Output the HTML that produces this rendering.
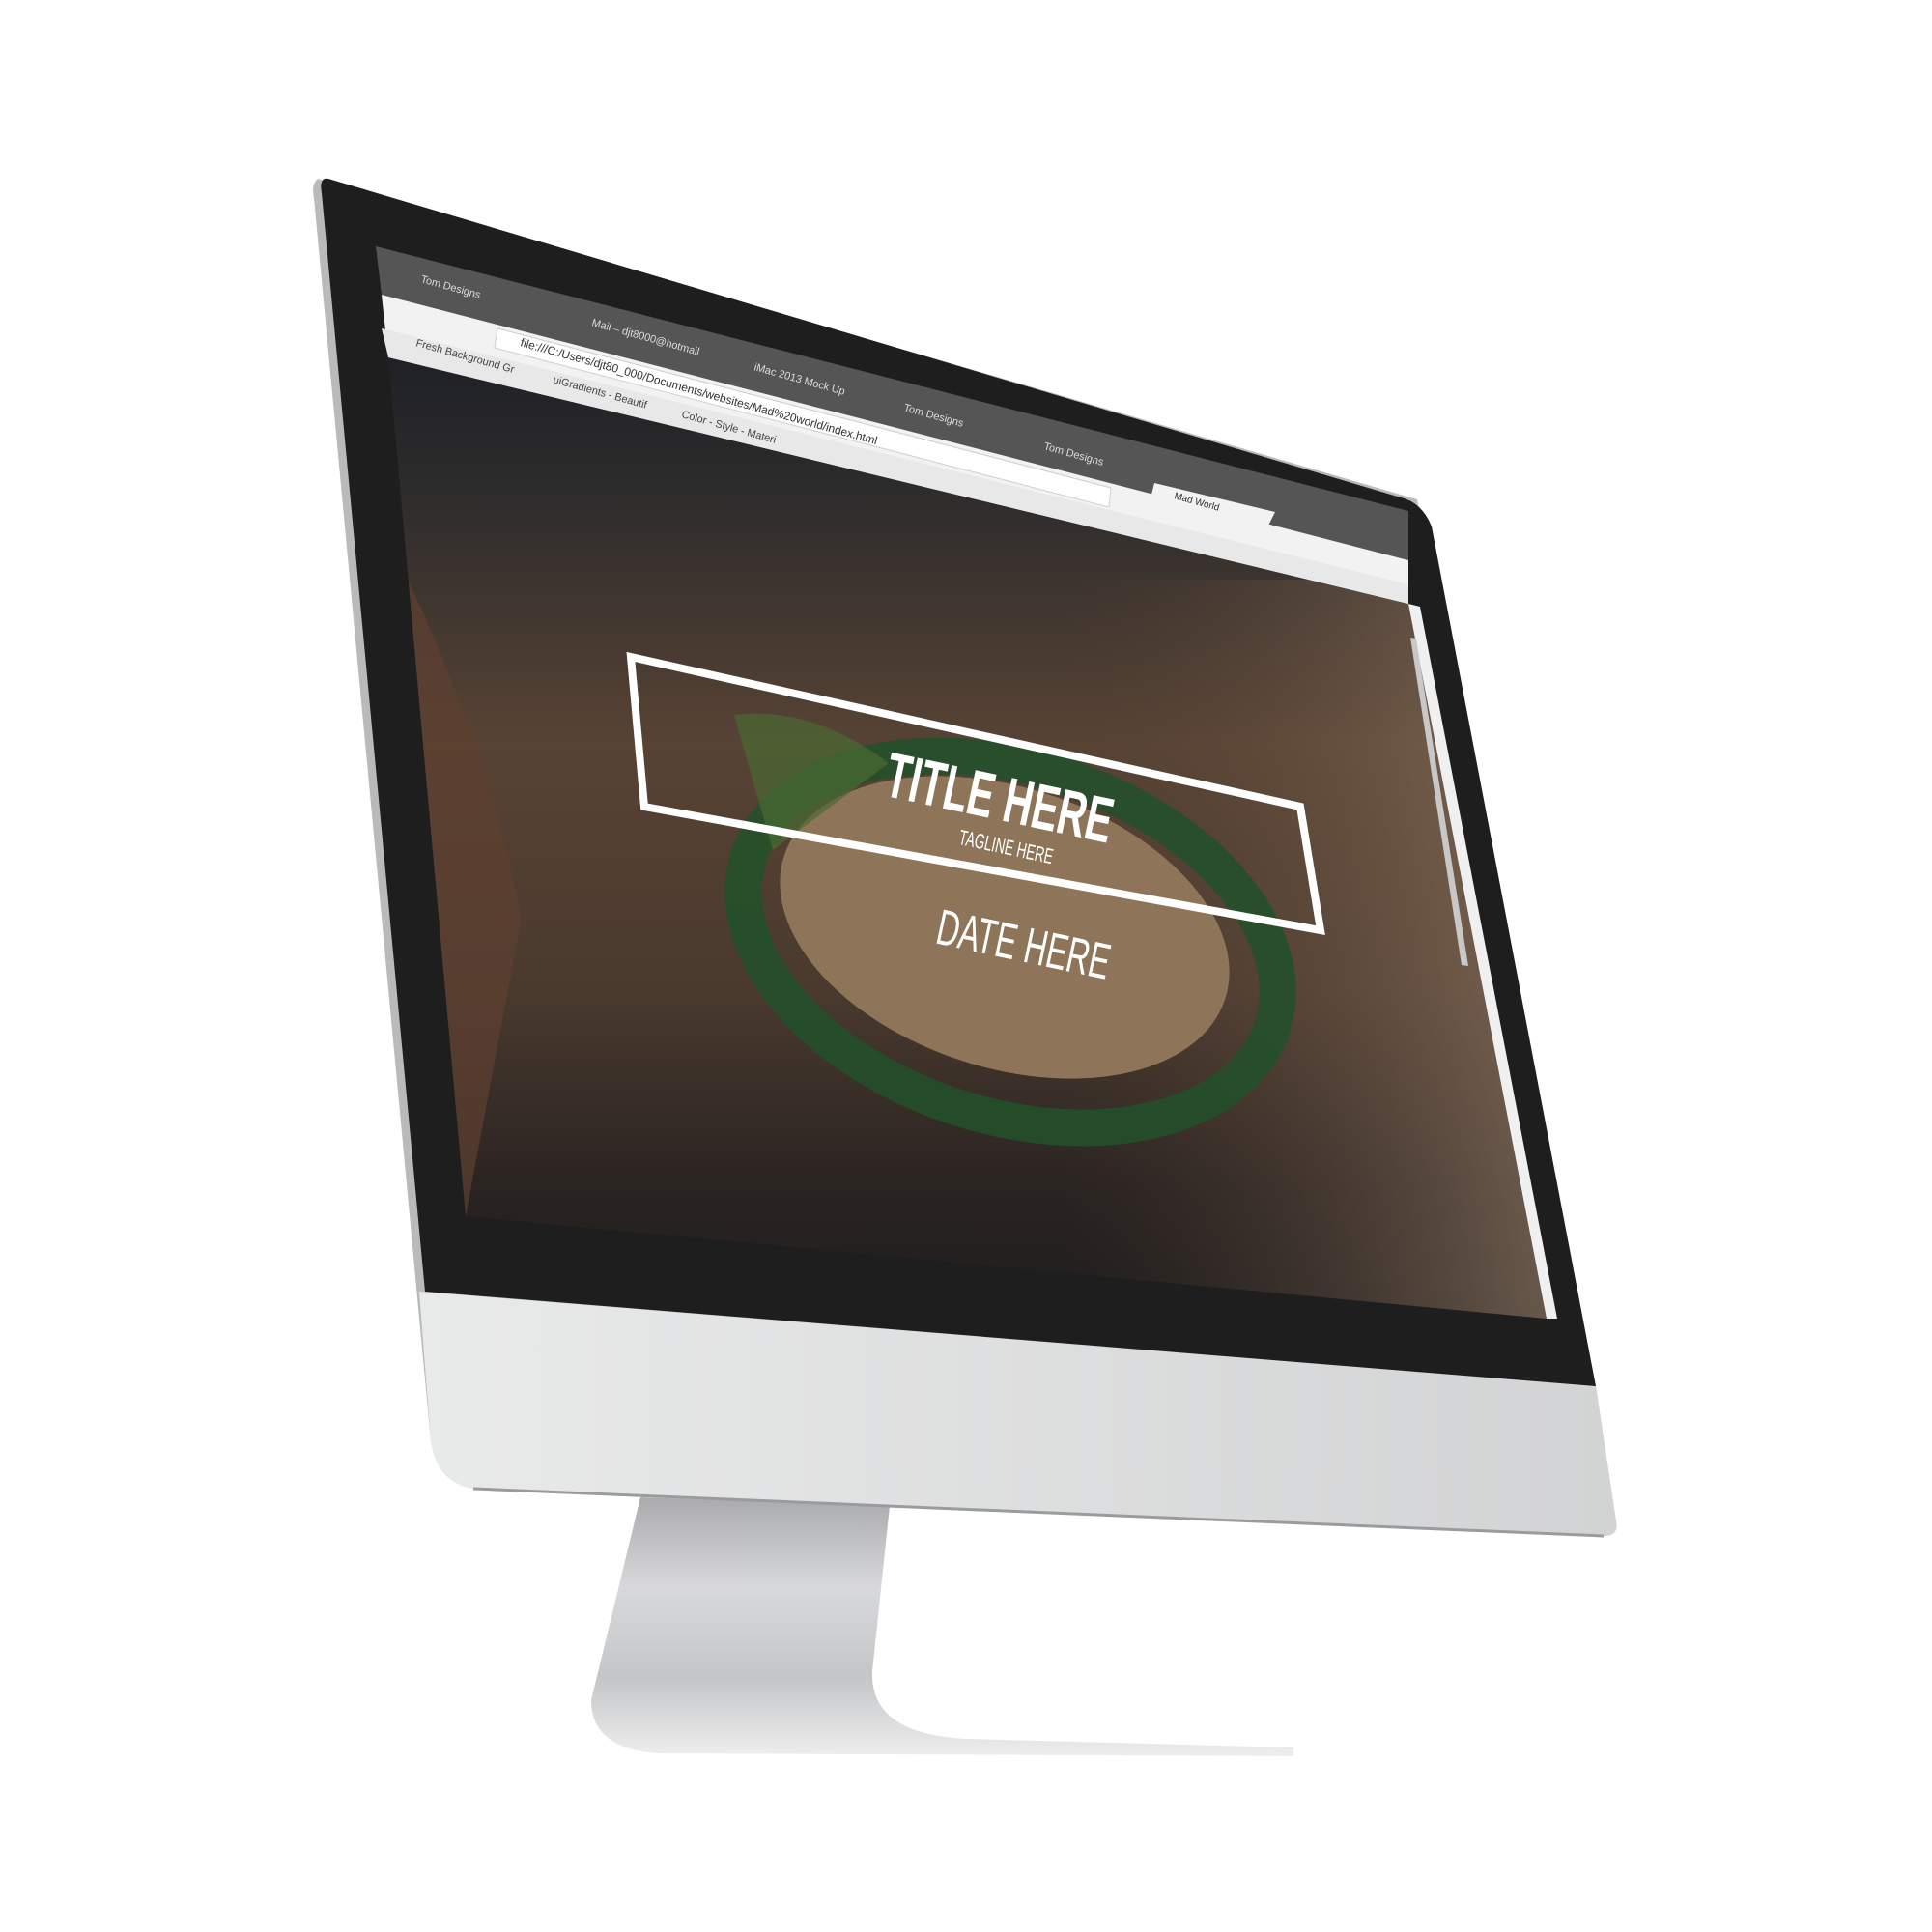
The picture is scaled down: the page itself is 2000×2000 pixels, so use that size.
<!DOCTYPE html>
<html><head><meta charset="utf-8"><style>
html,body{margin:0;padding:0;background:#fff;width:2000px;height:2000px;overflow:hidden}
svg{display:block}
text{font-family:"Liberation Sans",sans-serif}
</style></head><body>
<svg width="2000" height="2000" viewBox="0 0 2000 2000" xmlns="http://www.w3.org/2000/svg">
<defs>
<linearGradient id="stand" x1="0" y1="0" x2="0" y2="1">
<stop offset="0" stop-color="#a9aaac"/><stop offset="0.35" stop-color="#d8d9db"/><stop offset="0.7" stop-color="#c4c5c7"/><stop offset="1" stop-color="#eeeeee"/></linearGradient>
<linearGradient id="chin" x1="0" y1="0" x2="1" y2="0">
<stop offset="0" stop-color="#e9eaea"/><stop offset="1" stop-color="#d2d3d4"/></linearGradient>
<linearGradient id="sky" x1="0" y1="0" x2="0" y2="1">
<stop offset="0" stop-color="#1e2026"/><stop offset="0.15" stop-color="#2e2c2c"/><stop offset="0.4" stop-color="#574334"/><stop offset="0.65" stop-color="#4a3a2e"/><stop offset="0.85" stop-color="#2a2422"/><stop offset="1" stop-color="#1d1c1c"/></linearGradient>
<linearGradient id="right" x1="0" y1="0" x2="1" y2="0">
<stop offset="0" stop-color="#5a4030" stop-opacity="0"/><stop offset="1" stop-color="#a08670" stop-opacity="0.6"/></linearGradient>
<clipPath id="scr"><polygon points="402,370 1458,625 1601,1365 482,1259"/></clipPath>
</defs>
<path d="M663,1550 L921,1559 L903,1730 Q900,1795 1000,1800 L1339,1809 L1339,1818 L680,1815 Q612,1810 612,1760 Z" fill="url(#stand)"/>
<path d="M329,185 Q322,190 325,205 L446,1492 Q455,1535 490,1540 L1660,1590 Q1676,1590 1673,1575 L1652,1435 L1467,517 Z" fill="#b9babc"/>
<path d="M434,1337 L1652,1435 L1673,1575 Q1676,1590 1660,1590 L490,1541 Q452,1535 446,1492 Z" fill="url(#chin)"/>
<path d="M490,1541 L1660,1590" stroke="#9a9b9d" stroke-width="3"/>
<path d="M340,185 Q330,183 333,200 L440,1337 L1652,1435 L1482,545 Q1472,520 1450,515 Z" fill="#1e1e1e"/>
<g clip-path="url(#scr)">
<rect x="380" y="360" width="1240" height="1020" fill="url(#sky)"/>
<rect x="1100" y="600" width="520" height="780" fill="url(#right)"/>
<path d="M402,560 Q500,750 540,950 L482,1259 L402,1259 Z" fill="#5e4030" opacity="0.7"/>
<ellipse cx="1046" cy="975" rx="285" ry="180" transform="rotate(18 1046 975)" fill="none" stroke="#24502a" stroke-width="38" opacity="0.9"/>
<ellipse cx="1040" cy="960" rx="240" ry="145" transform="rotate(18 1040 960)" fill="#8e7458"/>
<path d="M760,740 Q840,730 920,790 L800,880 Z" fill="#4a6a33" opacity="0.7"/>
</g>
<polygon points="1458,625 1470,628 1612,1365 1601,1365" fill="#f0f0f0"/>
<polygon points="1460,660 1466,661 1520,1000 1513,999" fill="#c8c8c8"/>
<polygon points="389,255 1458,529 1458,580 395,305" fill="#555"/>
<polygon points="395,305 1458,580 1458,625 402,370" fill="#f2f2f2"/>
<polygon points="395,340 1458,605 1458,625 402,370" fill="#e8e8e8"/>
<polygon points="1195,500 1320,530 1310,550 1190,520" fill="#f2f2f2"/>
<polygon points="515,340 1150,505 1148,525 512,360" fill="#ffffff" stroke="#cfcfcf"/>
<g font-size="11" fill="#ddd">
<text transform="translate(435,292) rotate(15.5)">Tom Designs</text>
<text transform="translate(612,337) rotate(15.5)">Mail – djt8000@hotmail</text>
<text transform="translate(780,383) rotate(15.5)">iMac 2013 Mock Up</text>
<text transform="translate(935,425) rotate(15.5)">Tom Designs</text>
<text transform="translate(1080,465) rotate(15.5)">Tom Designs</text>
</g>
<text transform="translate(1215,516) rotate(15.5)" font-size="10" fill="#333">Mad World</text>
<text transform="translate(538,358) rotate(15.5)" font-size="12" fill="#333">file:///C:/Users/djt80_000/Documents/websites/Mad%20world/index.html</text>
<g font-size="11" fill="#444">
<text transform="translate(430,358) rotate(15.5)">Fresh Background Gr</text>
<text transform="translate(572,396) rotate(15.5)">uiGradients - Beautif</text>
<text transform="translate(705,432) rotate(15.5)">Color - Style - Materi</text>
</g>
<polygon points="653,680 1346,835 1367,963 667,835" fill="none" stroke="#fff" stroke-width="8"/>
<text transform="translate(1030,848) rotate(12) scale(0.62,1)" text-anchor="middle" font-size="66" font-weight="bold" fill="#fff">TITLE HERE</text>
<text transform="translate(1040,884) rotate(12) scale(0.62,1)" text-anchor="middle" font-size="22" fill="#fff">TAGLINE HERE</text>
<text transform="translate(1056,995) rotate(12) scale(0.62,1)" text-anchor="middle" font-size="52" fill="#fff">DATE HERE</text>
</svg>
</body></html>
